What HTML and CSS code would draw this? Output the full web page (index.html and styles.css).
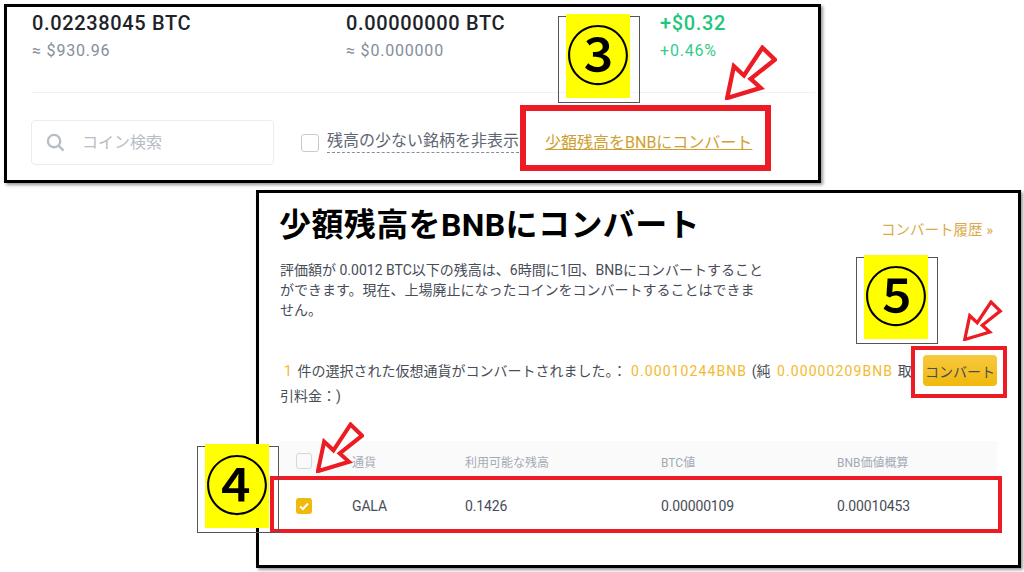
FILE: index.html
```html
<!DOCTYPE html>
<html lang="ja">
<head>
   <meta charset="UTF-8">
   <title>少額残高をBNBにコンバート</title>
   <link rel="stylesheet" href="styles.css">
</head>
<body>
   <svg class="defs" width="0" height="0">
      <symbol id="arrow" viewBox="-6 -6 154 164">
         <polygon points="0,152 20,57 50,85 105,2 142,38 70,95 100,122"></polygon>
      </symbol>
   </svg>

   <section class="panel balance">
      <div class="stats">
         <div class="stat">
            <div class="stat-main">0.02238045 BTC</div>
            <div class="stat-sub">≈ $930.96</div>
         </div>
         <div class="stat">
            <div class="stat-main">0.00000000 BTC</div>
            <div class="stat-sub">≈ $0.000000</div>
         </div>
         <div class="stat up">
            <div class="stat-main">+$0.32</div>
            <div class="stat-sub">+0.46%</div>
         </div>
      </div>
      <div class="divider"></div>
      <div class="filters">
         <div class="search">
            <svg class="search-icon" viewBox="0 0 20 20"><circle cx="8.5" cy="8.5" r="6.5"></circle><line x1="13.5" y1="13.5" x2="18.5" y2="18.5"></line></svg>
            <span class="search-text">コイン検索</span>
         </div>
         <span class="check"></span>
         <span class="hide-label">残高の少ない銘柄を非表示</span>
         <a class="convert-link">少額残高をBNBにコンバート</a>
      </div>
   </section>

   <section class="panel convert">
      <div class="convert-head">
         <h1>少額残高をBNBにコンバート</h1>
         <a class="history">コンバート履歴 »</a>
      </div>
      <p class="note">評価額が 0.0012 BTC以下の残高は、6時間に1回、BNBにコンバートすることができます。現在、上場廃止になったコインをコンバートすることはできません。</p>
      <div class="result">
         <button class="btn-convert">コンバート</button>
         <span class="num first">1</span>
         <span>件の選択された仮想通貨がコンバートされました。：</span>
         <span class="num">0.00010244BNB</span>
         <span>(純</span>
         <span class="num second">0.00000209BNB</span>
         <span>取</span><br>
         <span>引料金：)</span>
      </div>
      <div class="table">
         <div class="row head">
            <span class="check small"></span>
            <span>通貨</span>
            <span>利用可能な残高</span>
            <span>BTC値</span>
            <span>BNB価値概算</span>
         </div>
         <div class="row">
            <span class="check small on">
               <svg viewBox="0 0 16 16"><polyline points="4,8.5 7,11 12,5.5"></polyline></svg>
            </span>
            <span>GALA</span>
            <span>0.1426</span>
            <span>0.00000109</span>
            <span>0.00010453</span>
         </div>
      </div>
   </section>

   <!-- annotations on top of the screenshots -->
   <div class="frame frame-link"></div>
   <div class="frame frame-btn"></div>
   <div class="frame frame-row"></div>

   <svg class="arrow arrow-link"><use href="#arrow"></use></svg>
   <svg class="arrow arrow-btn"><use href="#arrow"></use></svg>
   <svg class="arrow arrow-row"><use href="#arrow"></use></svg>

   <div class="badge badge-3"><span>③</span></div>
   <div class="badge badge-4"><span>④</span></div>
   <div class="badge badge-5"><span>⑤</span></div>
</body>
</html>
```
FILE: styles.css
```css
*{
   margin: 0;
   padding: 0;
   box-sizing: border-box;
}
body{
   position: relative;
   width: 1024px;
   height: 572px;
   overflow: hidden;
   background: #fff;
   font-family: Roboto, "Noto Sans CJK JP", sans-serif;
   color: #474d57;
}
.defs{
   position: absolute;
}
.panel{
   background: #fff;
   border: 3px solid #000;
   box-shadow: 2px 2px 3px #999;
}

/* top panel */
.balance{
   width: 817px;
   height: 179px;
   margin: 4px 0 0 4px;
   padding: 4px 0 0 25px;
}
.stats{
   display: grid;
   grid-template-columns: 314px 314px auto;
}
.stat-main{
   font-size: 20px;
   font-weight: 500;
   line-height: 24px;
   letter-spacing: 0.65px;
   color: #1e2329;
}
.stat-sub{
   margin-top: 4px;
   font-size: 16px;
   line-height: 24px;
   letter-spacing: 0.8px;
   color: #848e9c;
}
.up .stat-main{
   color: #1fc77e;
}
.up .stat-sub{
   color: #35cb8c;
}
.divider{
   width: 784px;
   height: 1px;
   margin: 29px 0 27px -1px;
   background: #f0f1f3;
}
.filters{
   display: flex;
   align-items: center;
   margin-left: -1px;
}
.search{
   display: flex;
   align-items: center;
   width: 243px;
   height: 45px;
   padding-left: 14px;
   border: 1px solid #eaecef;
   border-radius: 4px;
   font-size: 16px;
   color: #b7bdc6;
}
.search-icon{
   width: 19px;
   height: 19px;
   margin-right: 17px;
   fill: none;
   stroke: #b7bdc6;
   stroke-width: 2.4;
}
.search-text{
   padding-bottom: 3px;
}
.check{
   flex: none;
   width: 18px;
   height: 18px;
   border: 1px solid #c6cbd2;
   border-radius: 3px;
   margin-left: 27px;
}
.hide-label{
   margin: 0 0 2px 8px;
   font-size: 16px;
   line-height: 22px;
   color: #5e6673;
   border-bottom: 1px dashed #848e9c;
}
.convert-link{
   margin: 0 0 3px 26px;
   font-size: 16px;
   color: #cf9f32;
   text-decoration: underline;
}

/* convert panel */
.convert{
   width: 765px;
   height: 378px;
   margin: 7px 0 0 256px;
   padding: 9px 21px 0 21px;
}
.convert-head{
   display: flex;
   justify-content: space-between;
}
h1{
   margin: 1px 0 0 -1px;
   font-size: 32px;
   line-height: 44px;
   font-weight: 700;
   letter-spacing: 0.4px;
   color: #000;
}
.history{
   margin: 18px 4px 0 0;
   font-size: 14.5px;
   line-height: 22px;
   color: #d9ab4a;
}
.note{
   width: 486px;
   margin-top: 13px;
   font-size: 14px;
   line-height: 20px;
   color: #474d57;
}
.result{
   margin-top: 35px;
   padding-top: 4px;
   font-size: 14px;
   line-height: 25px;
   color: #474d57;
}
.num{
   margin: 0 1px;
   color: #f3ba2f;
   letter-spacing: 1.1px;
}
.num.first{
   margin-left: 4px;
}
.num.second{
   margin-left: 3px;
}
.btn-convert{
   float: right;
   width: 74px;
   height: 31px;
   margin: -4px 0 0 8px;
   border: 0;
   border-radius: 4px;
   background: linear-gradient(to bottom, #f8c840, #f0b90b);
   font: 14px Roboto, "Noto Sans CJK JP", sans-serif;
   color: #474d57;
}
.table{
   clear: both;
   width: 718px;
   margin: 32px 0 0 -1px;
}
.row{
   display: grid;
   grid-template-columns: 56px 113px 196px 176px auto;
   align-items: center;
   height: 52px;
   padding-left: 17px;
   font-size: 14px;
   letter-spacing: -0.15px;
   color: #474d57;
}
.row.head{
   height: 39px;
   padding-top: 1px;
   background: #fafafa;
   font-size: 12px;
   letter-spacing: 0;
   color: #a4abb5;
}
.check.small{
   width: 16px;
   height: 16px;
   margin-left: 0;
   border-color: #d5d8dd;
}
.check.on{
   border: 0;
   background: #f0b90b;
}
.check.on svg{
   display: block;
   fill: none;
   stroke: #fff;
   stroke-width: 2;
}

/* annotations */
.frame{
   position: absolute;
   border: 4px solid #ed1c24;
}
.frame-link{
   left: 520px;
   top: 105px;
   width: 251px;
   height: 66px;
   border-width: 6px;
}
.frame-btn{
   left: 911px;
   top: 346px;
   width: 96px;
   height: 52px;
}
.frame-row{
   left: 270px;
   top: 476px;
   width: 732px;
   height: 57px;
}
.arrow{
   position: absolute;
   fill: #fff;
   stroke: #ed1c24;
   stroke-width: 13;
}
.arrow-link{
   left: 725px;
   top: 45px;
   width: 52px;
   height: 55px;
}
.arrow-btn{
   left: 960px;
   top: 300px;
   width: 45px;
   height: 41px;
}
.arrow-row{
   left: 316px;
   top: 422px;
   width: 48px;
   height: 51px;
}
.badge{
   position: absolute;
   width: 82px;
   height: 87px;
   border: 1px solid #555;
}
.badge span{
   position: absolute;
   left: 7px;
   top: -3px;
   width: 64px;
   height: 84px;
   background: #ff0;
   font: 500 64px/74px "Noto Sans CJK JP", sans-serif;
   color: #000;
   text-align: center;
}
.badge-3{
   left: 558px;
   top: 16px;
}
.badge-4{
   left: 197px;
   top: 446px;
}
.badge-5{
   left: 856px;
   top: 257px;
}
```
